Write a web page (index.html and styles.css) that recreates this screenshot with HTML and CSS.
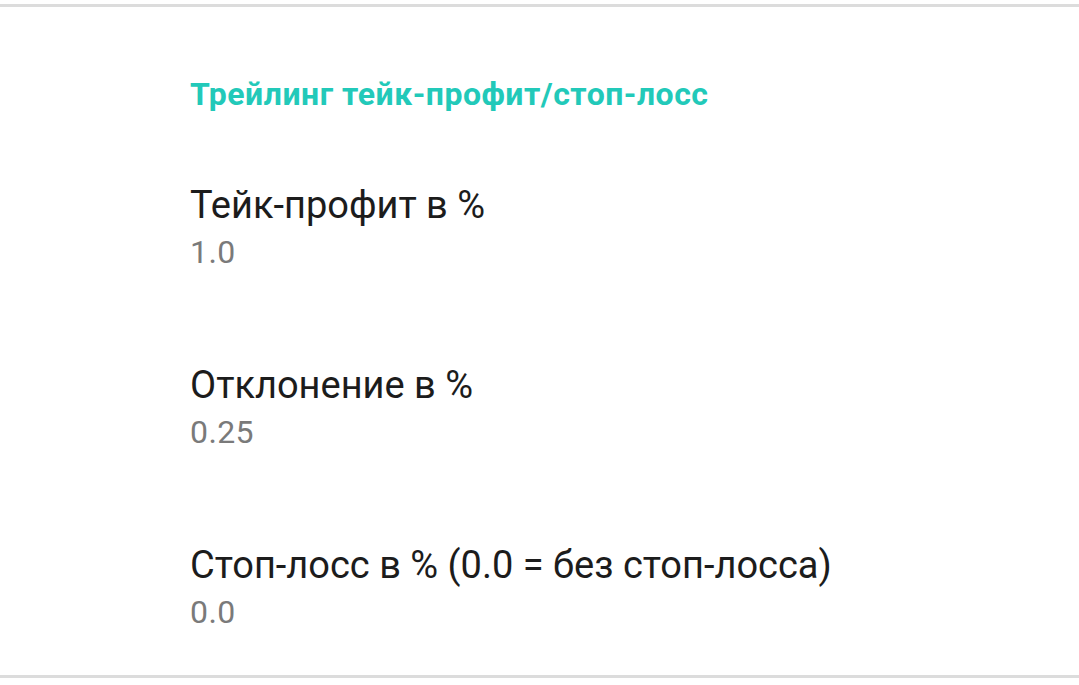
FILE: index.html
```html
<!DOCTYPE html>
<html lang="ru">
<head>
<meta charset="utf-8">
<link rel="stylesheet" href="styles.css">
</head>
<body>
<div class="screen">
  <div class="list">
    <div class="category">Трейлинг тейк-профит/стоп-лосс</div>
    <div class="pref">
      <div class="pref-title">Тейк-профит в %</div>
      <div class="pref-summary">1.0</div>
    </div>
    <div class="pref">
      <div class="pref-title">Отклонение в %</div>
      <div class="pref-summary">0.25</div>
    </div>
    <div class="pref">
      <div class="pref-title">Стоп-лосс в % (0.0 = без стоп-лосса)</div>
      <div class="pref-summary">0.0</div>
    </div>
  </div>
</div>
</body>
</html>
```
FILE: styles.css
```css
html, body {
  margin: 0;
  padding: 0;
  background: #ffffff;
}
.screen {
  width: 1079px;
  height: 685px;
  box-sizing: border-box;
  padding-top: 4px;
  overflow: hidden;
  font-family: Roboto, "Noto Sans", sans-serif;
}
.list {
  border-top: 3px solid #dcdcdc;
  border-bottom: 3px solid #dcdcdc;
  height: 674px;
  box-sizing: border-box;
  padding-left: 190px;
  padding-top: 67px;
}
.category {
  font-size: 32px;
  font-weight: 700;
  letter-spacing: 0.5px;
  color: #22c9b9;
  line-height: 40px;
  height: 108px;
}
.pref {
  height: 180px;
}
.pref:last-child {
  height: auto;
}
.pref-title {
  font-size: 38px;
  color: #1c1c1c;
  line-height: 46px;
}
.pref-summary {
  font-size: 32px;
  color: #7a7a7a;
  line-height: 48px;
  letter-spacing: 0.4px;
}
```
